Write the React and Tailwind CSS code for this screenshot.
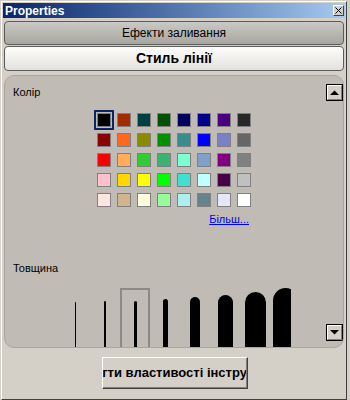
import React from "react";

const COLORS = [
  ["#000000", "#a52a00", "#004040", "#005000", "#000060", "#00008b", "#4b0082", "#282828"],
  ["#8b0000", "#ff6820", "#8b8b00", "#009000", "#388e8e", "#0000ff", "#7b7fc4", "#666666"],
  ["#ff0000", "#ffad5b", "#32cd32", "#3cb371", "#7fffd4", "#7fa0c8", "#800080", "#808080"],
  ["#ffc0cb", "#ffd700", "#ffff00", "#00ff00", "#40e0d0", "#c0ffff", "#480048", "#c0c0c0"],
  ["#ffe4e1", "#d2b48c", "#ffffe0", "#98fb98", "#afeeee", "#68838b", "#e6e6fa", "#ffffff"],
];

// line widths + how far below the row top each sample starts
const WIDTHS = [
  { w: 1, top: 14 },
  { w: 2, top: 13 },
  { w: 3, top: 13 },
  { w: 5, top: 11 },
  { w: 10, top: 9 },
  { w: 15, top: 7 },
  { w: 21, top: 4 },
  { w: 25, top: 0 },
];

function ArrowButton({ down }) {
  return (
    <div className="w-[17px] h-[17px] border border-black bg-[#d4d0c8] flex">
      <div className="flex-1 flex items-center justify-center border-t border-l border-white border-r border-b border-r-[#808080] border-b-[#808080]">
        <svg width="9" height="5" viewBox="0 0 9 5">
          {down ? (
            <polygon points="0,0 9,0 4.5,4.5" fill="#000" />
          ) : (
            <polygon points="0,5 9,5 4.5,0.5" fill="#000" />
          )}
        </svg>
      </div>
    </div>
  );
}

export default function App() {
  return (
    <div
      className="w-[350px] h-[400px] bg-[#d4d0c8] pt-[1px] pl-[1px] overflow-hidden"
      style={{ fontFamily: '"Liberation Sans", Arial, sans-serif' }}
    >
      <div className="w-[346px] h-[399px] border-t border-l border-white border-r border-b border-r-[#404040] border-b-[#404040] p-[1px] flex flex-col">
        {/* Title bar */}
        <div className="h-[15px] bg-gradient-to-r from-[#0a246a] to-[#a6caf0] flex items-center justify-between pl-[2px] pr-[1px]">
          <span className="text-white font-bold text-[12px] leading-none">Properties</span>
          <div className="w-[11px] h-[11px] bg-[#d4d0c8] border-t border-l border-white border-r border-b border-r-[#404040] border-b-[#404040] flex items-center justify-center">
            <svg width="7" height="7" viewBox="0 0 7 7">
              <path d="M0.5 0.5 L6.5 6.5 M6.5 0.5 L0.5 6.5" stroke="#000" strokeWidth="1" />
            </svg>
          </div>
        </div>

        <div className="flex flex-col px-[1px]">
          {/* Tabs */}
          <div className="mt-[3px] h-[24px] rounded-[4px] border border-[#5c5c5a] bg-gradient-to-b from-[#cbc9c5] to-[#a8a6a1] flex items-center justify-center text-[12px] text-black">
            Ефекти заливання
          </div>
          <div className="mt-[1px] h-[25px] rounded-[4px] border border-[#5c5c5a] bg-gradient-to-b from-[#fdfdfc] to-[#e3e1dc] flex items-center justify-center text-[14px] font-bold text-black">
            Стиль лінії
          </div>

          {/* Line style panel */}
          <div className="mt-[4px] h-[273px] rounded-[10px] border border-[#aaa69e] bg-[#c0bcb5] relative overflow-hidden flex flex-col">
            <div className="pl-2 pt-[10px] text-[11px] leading-[13px] text-black">Колір</div>

            <div className="mt-[14px] mx-auto grid grid-cols-8 gap-[6px] w-[154px]">
              {COLORS.flat().map((c, i) => (
                <div
                  key={i}
                  className={`w-[14px] h-[14px] border border-[#808080] ${i === 0 ? "outline-2 outline-offset-1 outline-[#0a246a]" : ""}`}
                  style={{ backgroundColor: c }}
                />
              ))}
            </div>

            <div className="mt-[6px] mx-auto w-[154px] text-right pr-[2px] text-[11px] leading-[13px]">
              <span className="text-[#0000ff] underline">Більш...</span>
            </div>

            <div className="mt-[36px] pl-2 text-[11px] leading-[13px] text-black">Товщина</div>

            <div className="mt-[13px] ml-[55px] w-[231px] h-[80px] overflow-hidden flex">
              {WIDTHS.map((s, i) => (
                <div
                  key={i}
                  className={`w-[30px] shrink-0 h-[80px] flex justify-center ${i === 2 ? "border-2 border-b-0 border-[#8d8a85]" : ""}`}
                >
                  <div
                    className="bg-black rounded-t-full h-[90px]"
                    style={{ width: s.w, marginTop: i === 2 ? s.top - 2 : s.top }}
                  />
                </div>
              ))}
            </div>

            <div className="absolute right-[0px] top-[8px]">
              <ArrowButton />
            </div>
            <div className="absolute right-[0px] bottom-[6px]">
              <ArrowButton down />
            </div>
          </div>

          {/* Bottom button */}
          <div className="mt-[9px] ml-[98px] w-[146px] h-[32px] bg-[#d4d0c8] border-t border-l border-white border-r border-b border-r-[#404040] border-b-[#404040] flex">
            <div className="flex-1 border-r border-b border-r-[#808080] border-b-[#808080] overflow-hidden flex items-center justify-center">
              <span className="whitespace-nowrap text-[13px] font-bold text-black">
                Зберегти властивості інструменту
              </span>
            </div>
          </div>
        </div>
      </div>
    </div>
  );
}
